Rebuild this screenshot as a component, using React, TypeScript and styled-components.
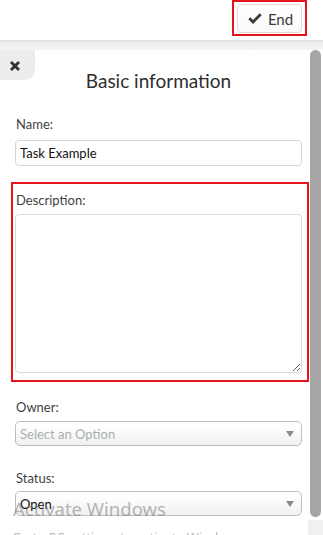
import React from "react";
import styled, { createGlobalStyle } from "styled-components";

const Global = createGlobalStyle`
  html, body { margin: 0; padding: 0; background: #ffffff; }
  body { font-family: Lato, "Noto Sans", sans-serif; overflow: hidden; }
  * { box-sizing: border-box; }
`;

const Page = styled.div`
  width: 323px;
  height: 535px;
  display: flex;
  flex-direction: column;
  position: relative;
  overflow: hidden;
`;

const Header = styled.div`
  height: 40px;
  background: #ffffff;
  display: flex;
  justify-content: flex-end;
  align-items: flex-start;
  padding-right: 16px;
`;

const Highlight = styled.div`
  border: 2px solid #e8141c;
  padding: 2px 3px 1px 3px;
`;

const EndButton = styled.button`
  width: 65px;
  height: 29px;
  border: 1px solid #dcdcdc;
  border-radius: 4px;
  background: linear-gradient(#ffffff, #fafafa);
  display: flex;
  align-items: center;
  justify-content: center;
  gap: 6px;
  padding: 0 0 0 2px;
  font-family: Lato, sans-serif;
  font-size: 15px;
  color: #3a3a3a;
  cursor: pointer;
`;

const Band = styled.div`
  height: 10px;
  background: linear-gradient(#e0e0e0, #eeeeee 30%, #f4f4f4);
`;

const Main = styled.div`
  flex: 1;
  display: flex;
  min-height: 0;
`;

const Panel = styled.div`
  flex: 1;
  background: #ffffff;
  position: relative;
  padding: 19px 6px 0 15px;
`;

const CloseTab = styled.button`
  position: absolute;
  left: 0;
  top: 0;
  width: 35px;
  height: 30px;
  border: none;
  background: #ececec;
  border-bottom-right-radius: 10px;
  display: flex;
  align-items: center;
  justify-content: center;
  padding: 1px 6px 0 0;
  cursor: pointer;
`;

const Title = styled.h2`
  margin: 0 0 24px 0;
  font-family: Lato, sans-serif;
  font-weight: 400;
  font-size: 19px;
  line-height: 23px;
  text-align: center;
  color: #2e2e2e;
`;

const Group = styled.div<{ $gap: number }>`
  margin-top: ${(p) => p.$gap}px;
`;

const HighlightGroup = styled.div`
  margin: 16px -7px 0 -4px;
  border: 2px solid #e8141c;
  padding: 8px 5px 7px 2px;
`;

const Label = styled.label<{ $space: number }>`
  display: block;
  font-family: Lato, sans-serif;
  font-size: 13px;
  line-height: 16px;
  color: #3f3f3f;
  margin-bottom: ${(p) => p.$space}px;
  padding-left: 1px;
`;

const TextInput = styled.input`
  display: block;
  width: 100%;
  height: 26px;
  border: 1px solid #d6d6d6;
  border-radius: 4px;
  padding: 0 4px;
  font-family: Lato, sans-serif;
  font-size: 13px;
  color: #111111;
  background: #ffffff;
  outline: none;
`;

const TextArea = styled.textarea`
  display: block;
  width: 100%;
  height: 159px;
  border: 1px solid #dadada;
  border-radius: 4px;
  padding: 4px;
  font-family: Lato, sans-serif;
  font-size: 13px;
  resize: both;
  outline: none;
  margin: 0;
`;

const Select = styled.div`
  height: 25px;
  border: 1px solid #b6c1c4;
  border-radius: 5px;
  background: linear-gradient(#ffffff 20%, #f0f0f0);
  display: flex;
  align-items: center;
  justify-content: space-between;
  padding: 0 7px 0 4px;
`;

const SelectText = styled.span<{ $placeholder?: boolean }>`
  font-family: Lato, sans-serif;
  font-size: 13px;
  color: ${(p) => (p.$placeholder ? "#a9b0b2" : "#111111")};
`;

const Arrow = styled.span`
  width: 0;
  height: 0;
  border-left: 4px solid transparent;
  border-right: 4px solid transparent;
  border-top: 6px solid #8a8a8a;
`;

const ScrollColumn = styled.div`
  width: 15px;
  display: flex;
  flex-direction: column;
`;

const ScrollTrack = styled.div`
  background: #ffffff;
  padding: 0 2px 3px 2px;
  height: 470px;
`;

const Thumb = styled.div`
  height: 100%;
  background: #a6a6a6;
  border-radius: 6px;
`;

const TrackEnd = styled.div`
  flex: 1;
  background: #f0f0f0;
`;

const Watermark = styled.div`
  position: absolute;
  left: 12px;
  top: 497px;
  pointer-events: none;
  font-family: "Noto Sans", "Open Sans", sans-serif;
  color: rgba(120, 120, 120, 0.55);
`;

const WaterTitle = styled.div`
  font-size: 18.5px;
  line-height: 24px;
  padding-left: 1px;
`;

const WaterSub = styled.div`
  font-size: 13px;
  line-height: 18px;
  margin-top: 7px;
`;

export default function App() {
  return (
    <>
      <Global />
      <Page>
        <Header>
          <Highlight>
            <EndButton>
              <svg width="14" height="11" viewBox="0 0 14 11">
                <path d="M1.3 5.3 L5 9 L12.7 1.3" fill="none" stroke="#3b3b3b" strokeWidth="2.8" />
              </svg>
              End
            </EndButton>
          </Highlight>
        </Header>
        <Band />
        <Main>
          <Panel>
            <CloseTab aria-label="close">
              <svg width="10" height="10" viewBox="0 0 10 10">
                <path d="M1 1 L9 9 M9 1 L1 9" stroke="#2f2f2f" strokeWidth="2.8" />
              </svg>
            </CloseTab>
            <Title>Basic information</Title>
            <Group $gap={0}>
              <Label $space={8}>Name:</Label>
              <TextInput defaultValue="Task Example" />
            </Group>
            <HighlightGroup>
              <Label $space={6}>Description:</Label>
              <TextArea />
            </HighlightGroup>
            <Group $gap={17}>
              <Label $space={6}>Owner:</Label>
              <Select>
                <SelectText $placeholder>Select an Option</SelectText>
                <Arrow />
              </Select>
            </Group>
            <Group $gap={24}>
              <Label $space={5}>Status:</Label>
              <Select>
                <SelectText>Open</SelectText>
                <Arrow />
              </Select>
            </Group>
          </Panel>
          <ScrollColumn>
            <ScrollTrack>
              <Thumb />
            </ScrollTrack>
            <TrackEnd />
          </ScrollColumn>
        </Main>
        <Watermark>
          <WaterTitle>Activate Windows</WaterTitle>
          <WaterSub>Go to PC settings to activate Windows.</WaterSub>
        </Watermark>
      </Page>
    </>
  );
}
